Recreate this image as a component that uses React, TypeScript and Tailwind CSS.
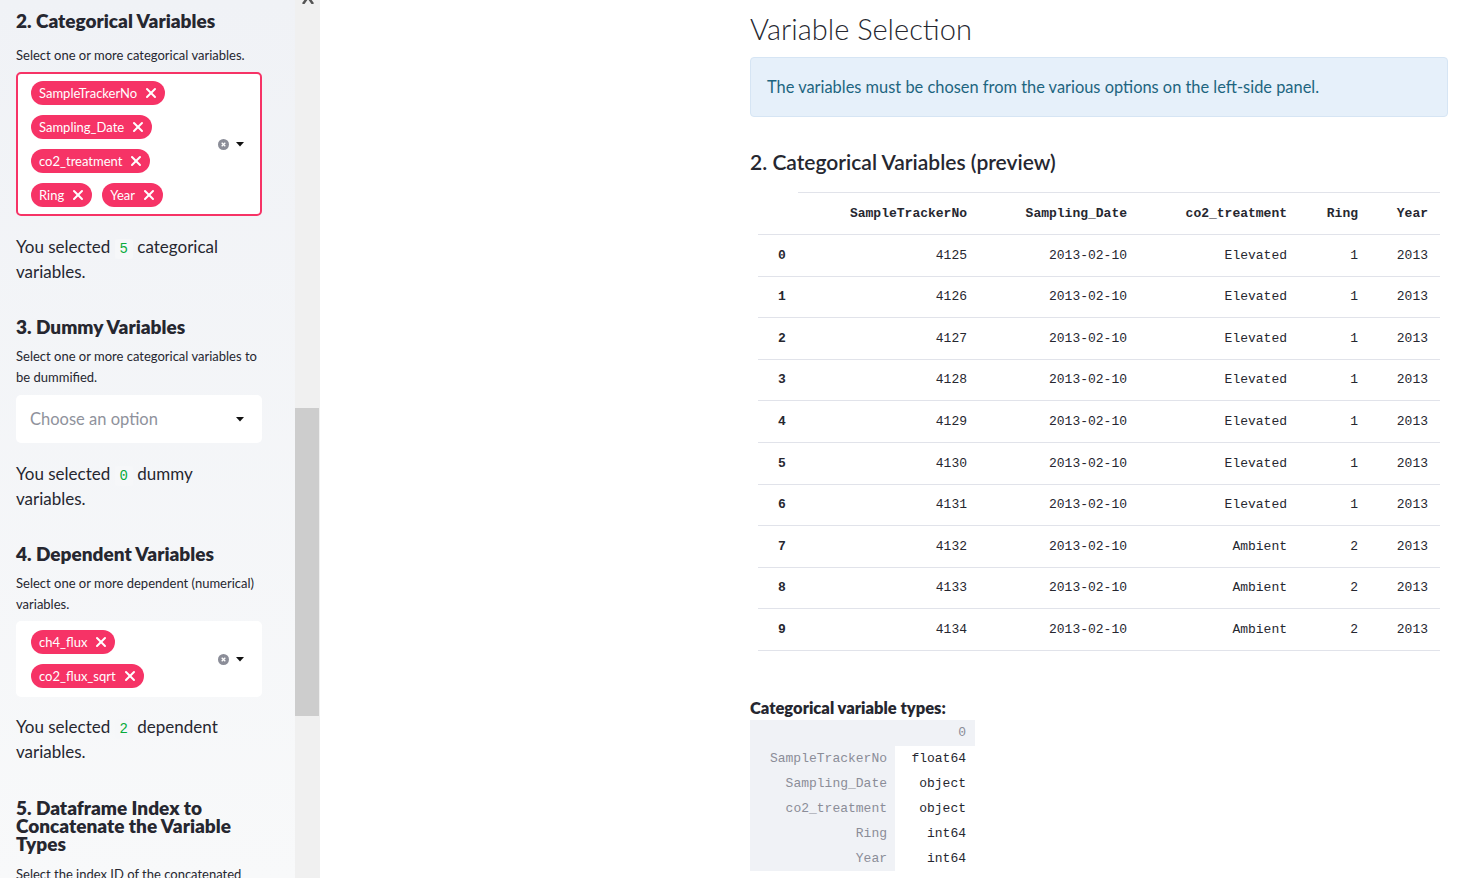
import React from 'react';
import { X } from 'lucide-react';

const rows = [
  { i: 0, no: 4125, t: 'Elevated', ring: 1 },
  { i: 1, no: 4126, t: 'Elevated', ring: 1 },
  { i: 2, no: 4127, t: 'Elevated', ring: 1 },
  { i: 3, no: 4128, t: 'Elevated', ring: 1 },
  { i: 4, no: 4129, t: 'Elevated', ring: 1 },
  { i: 5, no: 4130, t: 'Elevated', ring: 1 },
  { i: 6, no: 4131, t: 'Elevated', ring: 1 },
  { i: 7, no: 4132, t: 'Ambient', ring: 2 },
  { i: 8, no: 4133, t: 'Ambient', ring: 2 },
  { i: 9, no: 4134, t: 'Ambient', ring: 2 },
];

const dtypes = [
  ['SampleTrackerNo', 'float64'],
  ['Sampling_Date', 'object'],
  ['co2_treatment', 'object'],
  ['Ring', 'int64'],
  ['Year', 'int64'],
];

const Tag = ({ label }: { label: string }) => (
  <span className="m-[5px] inline-flex h-[24px] items-center gap-[6px] rounded-full bg-[#f63366] pl-2 pr-[6px] text-[13px] leading-none text-white">
    {label}
    <X className="h-4 w-4" strokeWidth={3} />
  </span>
);

const Caret = () => (
  <svg width="8" height="5" viewBox="0 0 8 5" className="shrink-0">
    <path d="M0 0h8L4 4.5z" fill="#111" />
  </svg>
);

const ClearIcon = () => (
  <svg width="11" height="11" viewBox="0 0 11 11" className="shrink-0">
    <circle cx="5.5" cy="5.5" r="5.5" fill="#8b8d98" />
    <path d="M3.7 3.7l3.6 3.6M7.3 3.7L3.7 7.3" stroke="#fff" strokeWidth="1.3" />
  </svg>
);

const MultiSelect = ({ tags, focused }: { tags: string[]; focused?: boolean }) => (
  <div
    className={`flex items-center rounded-[5px] border-2 bg-white ${
      focused ? 'border-[#f63366]' : 'border-transparent'
    }`}
  >
    <div className="flex flex-1 flex-wrap py-[2px] pl-2">
      {tags.map((t) => (
        <Tag key={t} label={t} />
      ))}
    </div>
    <div className="flex items-center gap-[7px] pl-2 pr-[16px]">
      <ClearIcon />
      <Caret />
    </div>
  </div>
);

const Code = ({ v }: { v: string }) => (
  <code className="inline-block rounded-[3px] bg-[#f6f7f9] px-[5px] align-baseline font-[family-name:'Liberation_Mono',monospace] text-[14px] leading-[20px] text-[#09ab3b]">
    {v}
  </code>
);

const mono = "font-[family-name:'Liberation_Mono',monospace]";

export default function App() {
  return (
    <div className="flex h-[878px] w-full overflow-hidden bg-white font-[family-name:Lato,sans-serif] text-[#262730]">
      {/* Sidebar */}
      <aside className="w-[295px] shrink-0 overflow-hidden bg-gradient-to-b from-[#f0f2f6] to-[#f8f9fa] pl-4 pr-[33px] pt-[9px]">
        <h3 className="text-[19px] font-extrabold leading-[24px]">2. Categorical Variables</h3>
        <p className="mt-[12px] text-[13px] leading-[21px]">Select one or more categorical variables.</p>
        <div className="mt-[6px]">
          <MultiSelect focused tags={['SampleTrackerNo', 'Sampling_Date', 'co2_treatment', 'Ring', 'Year']} />
        </div>
        <p className="mt-[18px] text-[17px] leading-[25px]">
          You selected <Code v="5" /> categorical variables.
        </p>

        <h3 className="mt-[31px] text-[19px] font-extrabold leading-[24px]">3. Dummy Variables</h3>
        <p className="mt-[7px] text-[13px] leading-[21px]">
          Select one or more categorical variables to be dummified.
        </p>
        <div className="mt-[7px] flex h-[48px] items-center justify-between rounded-[5px] bg-white pl-[14px] pr-[18px]">
          <span className="text-[16.5px] text-[#8f929c]">Choose an option</span>
          <Caret />
        </div>
        <p className="mt-[18px] text-[17px] leading-[25px]">
          You selected <Code v="0" /> dummy variables.
        </p>

        <h3 className="mt-[31px] text-[19px] font-extrabold leading-[24px]">4. Dependent Variables</h3>
        <p className="mt-[7px] text-[13px] leading-[21px]">Select one or more dependent (numerical) variables.</p>
        <div className="mt-[6px]">
          <MultiSelect tags={['ch4_flux', 'co2_flux_sqrt']} />
        </div>
        <p className="mt-[17px] text-[17px] leading-[25px]">
          You selected <Code v="2" /> dependent variables.
        </p>

        <h3 className="mt-[35px] text-[19px] font-extrabold leading-[18px]">
          5. Dataframe Index to Concatenate the Variable Types
        </h3>
        <p className="mt-[11px] text-[13px] leading-[21px]">Select the index ID of the concatenated dataframe.</p>
      </aside>

      {/* Sidebar scrollbar */}
      <div className="flex w-[25px] shrink-0 flex-col items-center bg-[#f0f0f0]">
        <svg width="12" height="4" viewBox="0 0 12 4" className="shrink-0">
          <path d="M6 -3L1 4M6 -3L11 4" stroke="#555" strokeWidth="2.5" />
        </svg>
        <div className="mt-[404px] h-[308px] w-full pr-[1px]">
          <div className="h-full w-full bg-[#cdcdcd]" />
        </div>
      </div>

      {/* Main */}
      <main className="min-w-0 flex-1 pl-[430px] pt-[11px]">
        <div className="w-[698px]">
          <h1 className="text-[29px] font-light leading-[36px]">Variable Selection</h1>
          <div className="mt-[10px] flex h-[60px] items-center rounded-[4px] border border-[#d6e5f4] bg-[#e6f0fa] px-4 text-[16.4px] text-[#1d6580]">
            The variables must be chosen from the various options on the left-side panel.
          </div>

          <h2 className="mt-[31px] text-[21px] font-semibold leading-[28px]">2. Categorical Variables (preview)</h2>

          <table className={`mt-[16px] ml-2 w-[682px] border-collapse text-[13px] ${mono}`}>
            <thead>
              <tr className="h-[42px] border-b border-[#e1e3ea]">
                <th className="w-[40px]" />
                <th className="w-[181px] border-t border-[#e1e3ea] pr-3 text-right font-bold">SampleTrackerNo</th>
                <th className="w-[160px] border-t border-[#e1e3ea] pr-3 text-right font-bold">Sampling_Date</th>
                <th className="w-[160px] border-t border-[#e1e3ea] pr-3 text-right font-bold">co2_treatment</th>
                <th className="w-[71px] border-t border-[#e1e3ea] pr-3 text-right font-bold">Ring</th>
                <th className="w-[70px] border-t border-[#e1e3ea] pr-3 text-right font-bold">Year</th>
              </tr>
            </thead>
            <tbody>
              {rows.map((r) => (
                <tr key={r.i} className="h-[41.6px] border-b border-[#e1e3ea]">
                  <th className="pl-5 text-left font-bold">{r.i}</th>
                  <td className="pr-3 text-right">{r.no}</td>
                  <td className="pr-3 text-right">2013-02-10</td>
                  <td className="pr-3 text-right">{r.t}</td>
                  <td className="pr-3 text-right">{r.ring}</td>
                  <td className="pr-3 text-right">2013</td>
                </tr>
              ))}
            </tbody>
          </table>

          <p className="mt-[45px] text-[16.5px] font-extrabold leading-[24px]">Categorical variable types:</p>
          <table className={`w-[225px] border-collapse text-[13px] ${mono}`}>
            <thead>
              <tr className="h-[26px] bg-[#f0f2f6]">
                <th className="w-[145px]" />
                <th className="w-[80px] pr-[9px] text-right font-normal text-[#8b8d98]">0</th>
              </tr>
            </thead>
            <tbody>
              {dtypes.map(([k, v]) => (
                <tr key={k} className="h-[25px]">
                  <th className="bg-[#f0f2f6] pr-2 text-right font-normal text-[#8b8d98]">{k}</th>
                  <td className="bg-white pr-[9px] text-right">{v}</td>
                </tr>
              ))}
            </tbody>
          </table>
        </div>
      </main>
    </div>
  );
}
